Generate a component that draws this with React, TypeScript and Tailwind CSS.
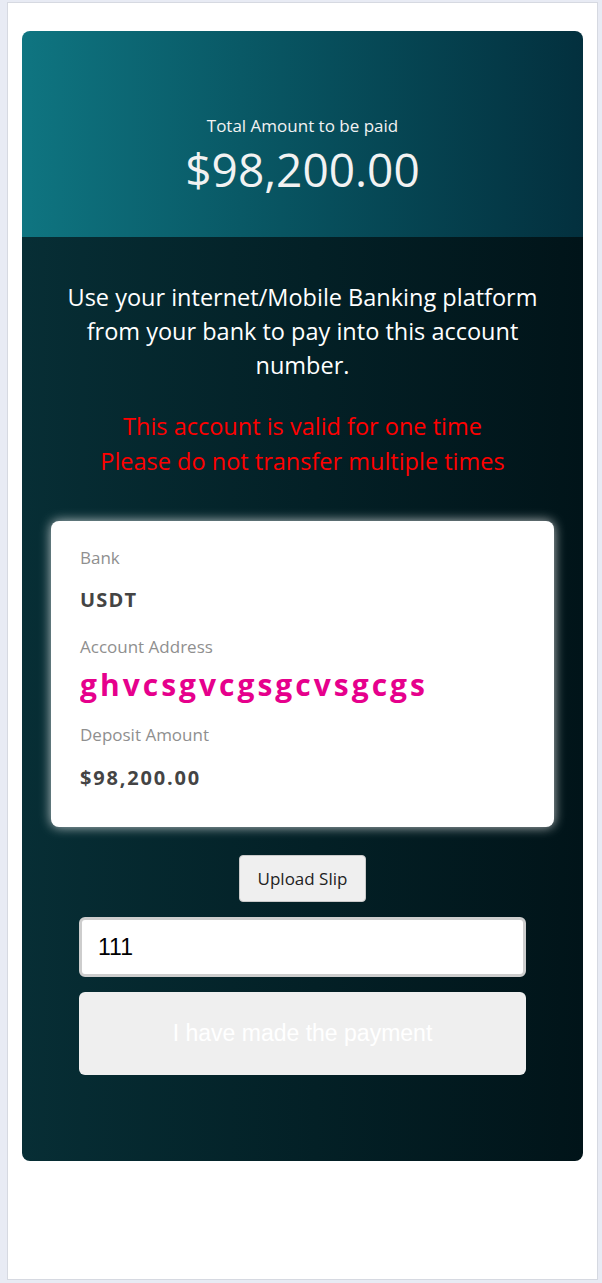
import { useState } from 'react';

export default function App() {
  const [ref, setRef] = useState<string>('111');

  return (
    <div className="min-h-[1283px] bg-[#e8ebf4] pl-[7px] pr-[4px] pt-[2px] pb-[3px] font-['Segoe_UI','Open_Sans',sans-serif]">
      <div className="h-[1278px] bg-white border border-[#d6d9e1] px-[14px] pt-[28px]">
        <div className="rounded-[8px] overflow-hidden">
          {/* amount header */}
          <div className="h-[206px] bg-gradient-to-r from-[#0f7581] to-[#03303e] flex flex-col items-center justify-center pt-[44px] text-[#f2f2f2]">
            <p className="text-[17px] leading-[22px]">Total Amount to be paid</p>
            <p className="text-[46px] leading-[56px] mt-[4px]">$98,200.00</p>
          </div>

          {/* instructions + account */}
          <div className="bg-gradient-to-r from-[#072e35] to-[#011419] pt-[43px] pb-[86px] flex flex-col items-center">
            <p className="text-white text-[23.5px] leading-[34px] text-center px-[40px]">
              Use your internet/Mobile Banking platform from your bank to pay into this account number.
            </p>
            <p className="text-[#ff0000] text-[23.5px] leading-[35px] text-center mt-[27px]">
              This account is valid for one time
              <br />
              Please do not transfer multiple times
            </p>

            <div className="self-stretch mx-[29px] mt-[42px] bg-white rounded-[8px] shadow-[0_0_12px_rgba(255,255,255,0.75)] pl-[29px] pt-[25px] pb-[35px] flex flex-col">
              <span className="text-[17px] leading-[24px] text-[#8f8f8f]">Bank</span>
              <span className="mt-[16px] text-[20px] leading-[28px] font-bold tracking-[1.2px] text-[#444]">USDT</span>
              <span className="mt-[21px] text-[17px] leading-[24px] text-[#8f8f8f]">Account Address</span>
              <span className="h-[44px] overflow-hidden text-[30px] leading-[52px] font-bold tracking-[3px] text-[#e6008c]">ghvcsgvcgsgcvsgcgs</span>
              <span className="mt-[20px] text-[17px] leading-[24px] text-[#8f8f8f]">Deposit Amount</span>
              <span className="mt-[17px] text-[20px] leading-[28px] font-bold tracking-[1.8px] text-[#444]">$98,200.00</span>
            </div>

            <button className="mt-[28px] h-[47px] px-[18px] bg-[#efefef] border border-[#c9c9c9] rounded-[4px] text-[17px] text-[#222]">
              Upload Slip
            </button>

            <div className="self-stretch mx-[57px] mt-[15px] flex flex-col gap-[15px]">
              <input
                value={ref}
                onChange={(e) => setRef(e.target.value)}
                className="h-[60px] w-full bg-white border-[3px] border-[#cdcdcd] rounded-[6px] px-[16px] text-[23px] text-black font-['Liberation_Sans',Arial,sans-serif] outline-none"
              />
              <button
                disabled
                className="h-[83px] w-full bg-[#efefef] rounded-[6px] text-[23px] text-white font-['Liberation_Sans',Arial,sans-serif]"
              >
                I have made the payment
              </button>
            </div>
          </div>
        </div>
      </div>
    </div>
  );
}
